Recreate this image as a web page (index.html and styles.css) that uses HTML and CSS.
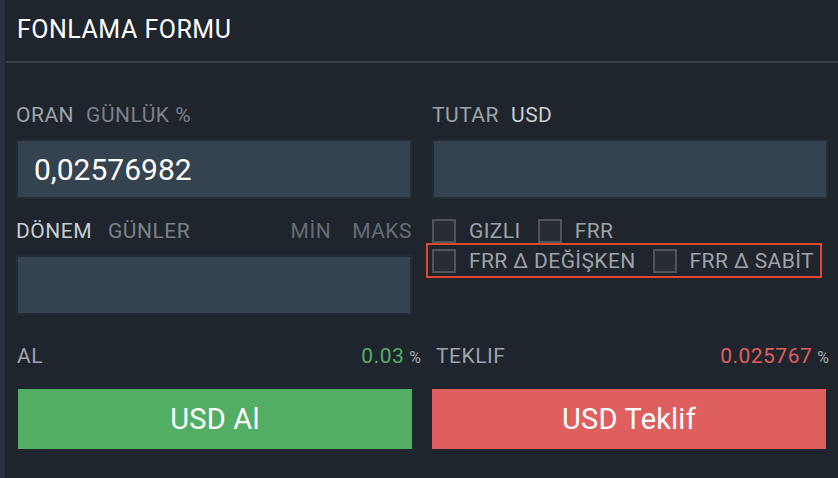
FILE: index.html
```
<!DOCTYPE html>
<html lang="tr">
  <head>
    <meta charset="UTF-8">
    <meta name="viewport" content="width=device-width, initial-scale=1.0"/>
    <title>Fonlama Formu</title>
    <link rel="stylesheet" href="styles.css">
  </head>
  <body>
    <div class="frame">
      <div class="edge"></div>
      <div class="panel">
        <header class="panel-head">
          <h1>FONLAMA FORMU</h1>
        </header>
        <form class="form">
          <div class="field">
            <div class="label-row">
              <span class="lbl">ORAN</span>
              <span class="unit">GÜNLÜK %</span>
            </div>
            <div class="input">0,02576982</div>
          </div>
          <div class="field">
            <div class="label-row">
              <span class="lbl">TUTAR</span>
              <span class="unit bright">USD</span>
            </div>
            <div class="input"></div>
          </div>

          <div class="field">
            <div class="label-row">
              <span class="lbl bright wide">DÖNEM</span>
              <span class="unit">GÜNLER</span>
              <span class="minmax">
                <span>MİN</span>
                <span>MAKS</span>
              </span>
            </div>
            <div class="input"></div>
          </div>
          <div class="checks">
            <div class="check-row">
              <label class="check"><span class="box"></span>GIZLI</label>
              <label class="check"><span class="box"></span>FRR</label>
            </div>
            <div class="check-row marked">
              <label class="check"><span class="box"></span>FRR Δ DEĞİŞKEN</label>
              <label class="check"><span class="box"></span>FRR Δ SABİT</label>
            </div>
          </div>

          <div class="field trade">
            <div class="label-row price-row left">
              <span class="lbl">AL</span>
              <span class="price">
                <span class="bid">0.03</span>
                <span class="pct">%</span>
              </span>
            </div>
            <button type="button" class="btn buy">USD Al</button>
          </div>
          <div class="field trade">
            <div class="label-row price-row right">
              <span class="lbl">TEKLIF</span>
              <span class="price">
                <span class="ask">0.025767</span>
                <span class="pct">%</span>
              </span>
            </div>
            <button type="button" class="btn sell">USD Teklif</button>
          </div>
        </form>
      </div>
    </div>
  </body>
</html>
```
FILE: styles.css
```
html, body {
  margin: 0;
  height: 100%;
}
body {
  background-color: #1f252d;
  font-family: Roboto, "Liberation Sans", sans-serif;
  overflow: hidden;
}
.frame {
  display: flex;
  height: 100%;
}
.edge {
  width: 5px;
  background-color: #28333e;
}
.panel {
  flex: 1;
  margin-left: 1px;
}
.panel-head {
  height: 61px;
  border-bottom: 2px solid #363e45;
  display: flex;
  align-items: center;
  padding-left: 11px;
}
.panel-head h1 {
  margin: 0;
  color: #ffffff;
  font-size: 25px;
  font-weight: 400;
  letter-spacing: 0.5px;
  padding-bottom: 3px;
}
.form {
  display: grid;
  grid-template-columns: 396px 396px;
  column-gap: 20px;
  padding: 38px 0 0 10px;
}
.field {
  display: flex;
  flex-direction: column;
  margin-bottom: 18px;
}
.label-row {
  display: flex;
  align-items: center;
  height: 28px;
  margin-bottom: 10px;
  font-size: 21px;
  letter-spacing: 0.5px;
}
.lbl {
  color: #9ea3a8;
  margin-right: 12px;
}
.lbl.wide {
  margin-right: 16px;
}
.unit {
  color: #7b8187;
}
.bright {
  color: #c9cdd1;
}
.minmax {
  margin-left: auto;
  display: flex;
  gap: 21px;
  color: #666d74;
}
.input {
  height: 56px;
  background-color: #35424f;
  border: 2px solid #242c35;
  color: #ffffff;
  font-size: 30px;
  display: flex;
  align-items: center;
  padding-left: 16px;
}
.checks {
  padding-top: 2px;
}
.check-row {
  display: flex;
  gap: 17px;
  height: 24px;
  margin-bottom: 3px;
}
.check-row.marked {
  margin: -3px 0 0 -6px;
  padding: 4px 4px 3px 4px;
  width: 384px;
  border: 2px solid #e2462f;
}
.check {
  display: flex;
  align-items: center;
  gap: 13px;
  color: #9ea3a8;
  font-size: 21px;
  letter-spacing: 0.4px;
}
.box {
  width: 20px;
  height: 20px;
  border: 2px solid #4e545a;
  background-color: #262d35;
}
.trade {
  margin-top: 9px;
}
.price-row {
  margin-bottom: 19px;
}
.price-row.left {
  margin-right: -9px;
  padding-left: 1px;
}
.price-row.right {
  margin-right: -1px;
  padding-left: 4px;
}
.price {
  margin-left: auto;
  display: flex;
  align-items: baseline;
  gap: 5px;
}
.bid {
  color: #53ae63;
}
.ask {
  color: #e05e5e;
}
.pct {
  color: #a3a8ad;
  font-size: 16px;
  letter-spacing: 0;
}
.btn {
  height: 60px;
  border: none;
  color: #ffffff;
  font-family: Roboto, "Liberation Sans", sans-serif;
  font-size: 29px;
  letter-spacing: 0.2px;
  cursor: pointer;
}
.btn.buy {
  background-color: #52ae63;
  margin-left: 2px;
}
.btn.sell {
  background-color: #df5f5e;
  margin-right: 2px;
}
```
